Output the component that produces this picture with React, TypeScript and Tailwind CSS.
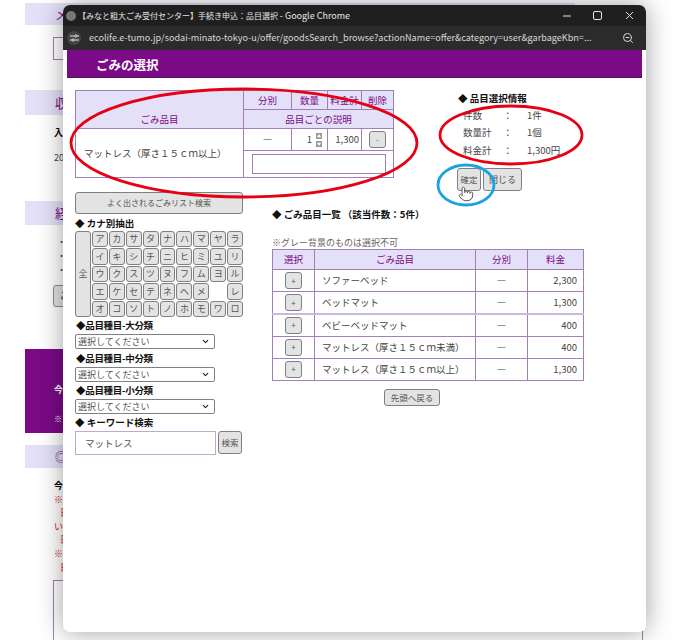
import React from 'react';
import { ChevronDown, Minus, Pointer, X, ZoomOut } from 'lucide-react';

const kana = [
  ['ア', 'カ', 'サ', 'タ', 'ナ', 'ハ', 'マ', 'ヤ', 'ラ'],
  ['イ', 'キ', 'シ', 'チ', 'ニ', 'ヒ', 'ミ', 'ユ', 'リ'],
  ['ウ', 'ク', 'ス', 'ツ', 'ヌ', 'フ', 'ム', 'ヨ', 'ル'],
  ['エ', 'ケ', 'セ', 'テ', 'ネ', 'ヘ', 'メ', '', 'レ'],
  ['オ', 'コ', 'ソ', 'ト', 'ノ', 'ホ', 'モ', 'ワ', 'ロ'],
];

const goods = [
  { name: 'ソファーベッド', price: '2,300' },
  { name: 'ベッドマット', price: '1,300' },
  { name: 'ベビーベッドマット', price: '400' },
  { name: 'マットレス（厚さ１５ｃｍ未満）', price: '400' },
  { name: 'マットレス（厚さ１５ｃｍ以上）', price: '1,300' },
];

const summary = [
  ['件数', '1件'],
  ['数量計', '1個'],
  ['料金計', '1,300円'],
];

const btn = 'rounded-[3px] border border-[#808080] bg-[#e3e3e3] text-[#555] flex items-center justify-center';
const th = 'border border-[#a27fb8] bg-[#e4e0f8] text-[#7a0a86] font-normal text-[9.5px] p-0';
const td = 'border border-[#a27fb8] text-[#444] text-[9.5px] p-0';

const Page: React.FC = () => (
  <div className="w-[575px] pl-[25px] pt-[3px]">
    <div className="h-[22px] bg-[#e4e0f8] pl-[30px] text-[13px] leading-[22px] text-[#7a0a86]">メ</div>
    <div className="ml-[28px] mt-[12px] h-[23px] w-[100px] border border-[#a27fb8]" />
    <div className="mt-[30px] h-[25px] bg-[#e4e0f8] pl-[30px] text-[13px] leading-[25px] text-[#7a0a86]">収</div>
    <div className="mt-[11px] pl-[29px] text-[9px] font-bold leading-[14px]">入</div>
    <div className="mt-[11px] pl-[29px] text-[9px] leading-[14px] text-[#444]">20</div>
    <div className="mt-[36px] h-[24px] bg-[#e4e0f8] pl-[30px] text-[13px] leading-[24px] text-[#7a0a86]">経</div>
    <div className="mt-[10px] pl-[32px] text-[9px] leading-[14px] text-[#444]">
      <div>・</div>
      <div>・</div>
      <div>・</div>
    </div>
    <div className="ml-[28px] mt-[8px] h-[22px] w-[40px] rounded-[3px] border border-[#8b8b8b] bg-[#e3e3e3] pl-[6px] text-[9px] leading-[20px]">ご</div>
    <div className="mt-[42px] h-[84px] bg-[#7a0a86] pl-[29px] pt-[34px] text-[9px] leading-[14px] text-white">
      <div className="font-bold">今</div>
      <div className="mt-[15px] text-[8px]">※</div>
    </div>
    <div className="mt-[12px] h-[23px] bg-[#e4e0f8] pl-[30px] text-[12px] leading-[23px] text-[#7a0a86]">◎</div>
    <div className="mt-[11px] pl-[29px] text-[9px] leading-[13.6px] text-[#e01010]">
      <div className="font-bold text-black">今</div>
      <div>※</div>
      <div className="pl-[6px]">日</div>
      <div>い</div>
      <div className="pl-[6px]">日</div>
      <div>※</div>
      <div className="pl-[6px]">日</div>
    </div>
    <div className="ml-[28px] mt-[6px] h-[70px] w-[590px] border border-[#a27fb8]" />
  </div>
);

const SelectedTable: React.FC = () => (
  <table className="h-[87px] w-[318px] table-fixed border-collapse">
    <colgroup>
      <col className="w-[168px]" />
      <col className="w-[48px]" />
      <col className="w-[36px]" />
      <col className="w-[34px]" />
      <col className="w-[32px]" />
    </colgroup>
    <tbody>
      <tr className="h-[19px]">
        <th rowSpan={2} className={`${th} pt-[19px]`}>ごみ品目</th>
        <th className={th}>分別</th>
        <th className={th}>数量</th>
        <th className={th}>料金計</th>
        <th className={th}>削除</th>
      </tr>
      <tr className="h-[19px]">
        <th colSpan={4} className={th}>品目ごとの説明</th>
      </tr>
      <tr className="h-[22px]">
        <td rowSpan={2} className={`${td} pl-[8px]`}>マットレス（厚さ１５ｃｍ以上）</td>
        <td className={`${td} text-center`}>―</td>
        <td className={td}>
          <div className="flex items-center justify-end gap-[4px] pr-[5px]">
            <span>1</span>
            <div className="flex flex-col gap-[2px]">
              <div className="h-[6px] w-[6px] bg-[#999] text-center text-[4px] leading-[6px] text-white">▲</div>
              <div className="h-[6px] w-[6px] bg-[#999] text-center text-[4px] leading-[6px] text-white">▼</div>
            </div>
          </div>
        </td>
        <td className={`${td} pr-[2px] text-right`}>1,300</td>
        <td className={td}>
          <div className={`${btn} mx-auto h-[17px] w-[17px] text-[8px]`}>-</div>
        </td>
      </tr>
      <tr className="h-[27px]">
        <td colSpan={4} className={td}>
          <div className="mx-auto h-[20px] w-[134px] border border-[#a27fb8]" />
        </td>
      </tr>
    </tbody>
  </table>
);

const SummaryPanel: React.FC = () => (
  <div className="ml-[64px] w-[140px] text-[9.5px] text-[#444]">
    <div className="mt-[1px] h-[14px] font-bold leading-[14px] text-[#111]">◆ 品目選択情報</div>
    <div className="mt-[1px]">
      {summary.map(([label, value]) => (
        <div key={label} className="flex h-[17.6px] items-center pl-[5px]">
          <span className="w-[40px]">{label}</span>
          <span className="w-[24px]">：</span>
          <span>{value}</span>
        </div>
      ))}
    </div>
    <div className="-ml-[1px] mt-[9px] flex gap-[2px]">
      <div className={`${btn} h-[23px] w-[24px] text-[8.5px]`}>確定</div>
      <div className={`${btn} h-[23px] w-[39px] text-[9px]`}>閉じる</div>
    </div>
  </div>
);

const KanaGrid: React.FC = () => (
  <div className="flex h-[86px] gap-[1px]">
    <div className={`${btn} w-[16px] text-[9px]`}>全</div>
    <div className="grid flex-1 grid-cols-9 grid-rows-5 gap-[1px]">
      {kana.flat().map((k, i) =>
        k ? (
          <div key={i} className={`${btn} text-[9px]`}>{k}</div>
        ) : (
          <div key={i} />
        ),
      )}
    </div>
  </div>
);

const Category: React.FC<{ label: string; heightClass?: string }> = ({ label, heightClass = 'h-[17px]' }) => (
  <>
    <div className={`flex items-center pl-[1px] text-[9.5px] font-bold tracking-[-0.3px] text-[#111] ${heightClass}`}>{label}</div>
    <div className="relative h-[15px] w-[140px]">
      <select className="block h-[15px] w-[140px] appearance-none rounded-[2px] border border-[#808080] bg-white py-0 pl-[2px] text-[9px] leading-[13px] text-[#555]">
        <option>選択してください</option>
      </select>
      <ChevronDown size={9} strokeWidth={3} className="absolute right-[5px] top-[3px] text-[#222]" />
    </div>
  </>
);

const SearchColumn: React.FC = () => (
  <div className="w-[168px]">
    <div className={`${btn} h-[22px] text-[8px]`}>よく出されるごみリスト検索</div>
    <div className="mt-[2px] h-[14px] text-[9.5px] font-bold leading-[14px] text-[#111]">◆ カナ別抽出</div>
    <div className="mt-[1px]">
      <KanaGrid />
    </div>
    <Category label="◆品目種目-大分類" />
    <Category label="◆品目種目-中分類" heightClass="h-[18px]" />
    <Category label="◆品目種目-小分類" />
    <div className="flex h-[17px] items-center text-[9.5px] font-bold text-[#111]">◆ キーワード検索</div>
    <div className="flex gap-[2px]">
      <div className="h-[24px] w-[141px] border border-[#c3a9cf] pl-[9px] text-[9.5px] leading-[22px] text-[#555]">マットレス</div>
      <div className={`${btn} h-[23px] w-[24px] text-[8.5px]`}>検索</div>
    </div>
  </div>
);

const GoodsList: React.FC = () => (
  <div className="ml-[29px] w-[311px]">
    <div className="mt-[15px] h-[14px] text-[9.5px] font-bold leading-[14px] text-[#111]">◆ ごみ品目一覧 （該当件数：5件）</div>
    <div className="mt-[16px] h-[12px] text-[9px] leading-[12px] text-[#666]">※グレー背景のものは選択不可</div>
    <table className="w-[311px] table-fixed border-collapse">
      <colgroup>
        <col className="w-[42px]" />
        <col className="w-[161px]" />
        <col className="w-[52px]" />
        <col className="w-[56px]" />
      </colgroup>
      <tbody>
        <tr className="h-[20px]">
          <th className={th}>選択</th>
          <th className={th}>ごみ品目</th>
          <th className={th}>分別</th>
          <th className={th}>料金</th>
        </tr>
        {goods.map((g, i) => (
          <tr key={g.name} className={i === 2 ? 'h-[22.2px] border-t-2 border-[#cbb8d8]' : 'h-[22.2px]'}>
            <td className={td}>
              <div className={`${btn} mx-auto h-[17px] w-[17px] text-[8px]`}>+</div>
            </td>
            <td className={`${td} pl-[7px]`}>{g.name}</td>
            <td className={`${td} text-center`}>―</td>
            <td className={`${td} pr-[6px] text-right`}>{g.price}</td>
          </tr>
        ))}
      </tbody>
    </table>
    <div className={`${btn} ml-[112px] mt-[8px] h-[17px] w-[56px] text-[8.5px]`}>先頭へ戻る</div>
  </div>
);

const PopupWindow: React.FC = () => (
  <div className="absolute left-[63px] top-[5px] h-[627px] w-[583px] overflow-hidden rounded-[7px] bg-white shadow-[0_0_26px_rgba(0,0,0,0.38)]">
    <div className="flex h-[21px] items-center bg-[#1f1f1f] pl-[3px] text-[#e6e6e6]">
      <div className="h-[10px] w-[10px] rounded-full bg-[#777]" />
      <span className="ml-[2px] flex-1 whitespace-nowrap text-[8px]">
        【みなと粗大ごみ受付センター】手続き申込：品目選択 <span className="text-[9px]">- Google Chrome</span>
      </span>
      <Minus size={12} className="mr-[20px]" strokeWidth={2.2} />
      <div className="mr-[21px] h-[9px] w-[9px] rounded-[2px] border-[1.5px] border-[#e6e6e6]" />
      <X size={13} className="mr-[10px]" strokeWidth={1.8} />
    </div>
    <div className="flex h-[24px] items-center bg-[#2b2b2b] pl-[4px] text-[#d8d8d8]">
      <div className="flex h-[14px] w-[14px] items-center justify-center rounded-full bg-[#444]">
        <svg width="9" height="8" viewBox="0 0 9 8" fill="none" stroke="#e0e0e0" strokeWidth="1">
          <path d="M0 2h4.5M7 2h2M0 6h2M4.5 6H9" />
          <circle cx="5.8" cy="2" r="1.1" />
          <circle cx="3.2" cy="6" r="1.1" />
        </svg>
      </div>
      <span className="ml-[8px] w-[525px] whitespace-nowrap text-[9.1px]">ecolife.e-tumo.jp/sodai-minato-tokyo-u/offer/goodsSearch_browse?actionName=offer&amp;category=user&amp;garbageKbn=...</span>
      <ZoomOut size={12} className="ml-[8px] text-[#d8d8d8]" strokeWidth={2} />
    </div>
    <div className="mx-[4px] h-[28px] border-b border-[#5a0a66] bg-[#7a0a86] pl-[29px] text-[12.5px] font-bold leading-[29px] text-white">ごみの選択</div>
    <div className="pl-[12px] pt-[12px]">
      <div className="flex h-[102px] items-start">
        <SelectedTable />
        <SummaryPanel />
      </div>
      <div className="flex items-start">
        <SearchColumn />
        <GoodsList />
      </div>
    </div>
  </div>
);

const Annotations: React.FC = () => (
  <>
    <svg className="absolute left-0 top-0" width="700" height="640" fill="none">
      <ellipse cx="244" cy="143" rx="173" ry="54" stroke="#e60012" strokeWidth="2.8" />
      <ellipse cx="511" cy="135" rx="71" ry="29" stroke="#e60012" strokeWidth="2.8" />
      <ellipse cx="466" cy="185" rx="28" ry="20" stroke="#1ba1e2" strokeWidth="2.8" />
    </svg>
    <Pointer size={16} className="absolute left-[458px] top-[186px] fill-white text-[#555]" strokeWidth={1.5} />
  </>
);

export default function App() {
  return (
    <div
      className="relative h-[640px] w-[700px] overflow-hidden bg-white"
      style={{ fontFamily: '"Noto Sans CJK JP", "Noto Sans", sans-serif' }}
    >
      <Page />
      <PopupWindow />
      <Annotations />
    </div>
  );
}
